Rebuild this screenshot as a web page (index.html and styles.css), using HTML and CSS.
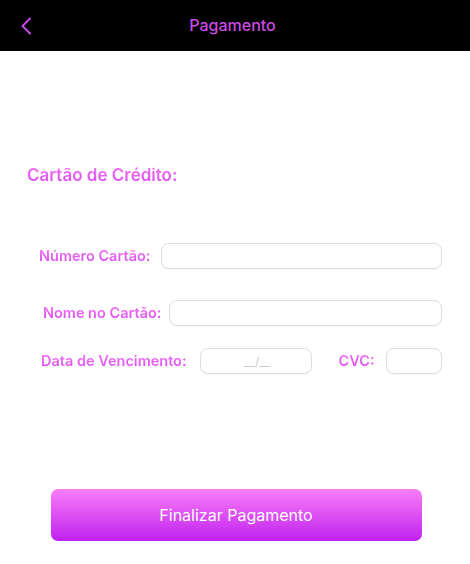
FILE: index.html
```html
<!DOCTYPE html>
<html lang="pt">
<head>
<meta charset="utf-8">
<title>Pagamento</title>
<link rel="stylesheet" href="styles.css">
</head>
<body>
<header class="topbar">
  <button class="back" aria-label="Voltar">
    <svg width="12" height="18" viewBox="0 0 12 18"><path d="M10 1.5 L2.5 9 L10 16.5" fill="none" stroke="#c64ae6" stroke-width="2" stroke-linecap="round" stroke-linejoin="round"/></svg>
  </button>
  <h1 class="title">Pagamento</h1>
</header>
<main class="content">
  <h2 class="section">Cartão de Crédito:</h2>
  <div class="row row-num">
    <label class="label">Número Cartão:</label>
    <div class="field grow"></div>
  </div>
  <div class="row row-name">
    <label class="label">Nome no Cartão:</label>
    <div class="field grow"></div>
  </div>
  <div class="row row-date">
    <label class="label">Data de Vencimento:</label>
    <div class="field date"><span class="ph">__/__</span></div>
    <label class="label cvc-label">CVC:</label>
    <div class="field cvc"></div>
  </div>
  <div class="actions">
    <button class="primary">Finalizar Pagamento</button>
  </div>
</main>
</body>
</html>
```
FILE: styles.css
```css
* { box-sizing: border-box; }
html, body { margin: 0; padding: 0; background: #fff; }
body { font-family: Inter, "Noto Sans", sans-serif; width: 470px; height: 564px; overflow: hidden; }
.topbar {
  height: 51px; background: #000; display: flex; align-items: center; position: relative;
}
.back {
  background: none; border: 0; padding: 0; margin-left: 19px; width: 14px; height: 20px;
  display: flex; align-items: center; justify-content: center; margin-top: 0;
}
.title {
  position: absolute; left: 0; right: 0; top: 0; margin: 0; text-align: center;
  font-size: 16px; font-weight: 500; color: #c94ae3; line-height: 51px; padding-right: 5px;
}
.content { display: flex; flex-direction: column; }
.label, .section {
  background: linear-gradient(#f77ef6, #d63ff0);
  -webkit-background-clip: text; background-clip: text; color: transparent;
  font-weight: 600;
}
.section { margin: 112px 0 0 27px; font-size: 17px; line-height: 24px; align-self: flex-start; }
.row { display: flex; align-items: center; padding-right: 28px; }
.label { font-size: 14.5px; line-height: 18px; white-space: nowrap; }
.field {
  height: 26px; border: 1px solid #dedede; border-radius: 8px; background: #fff;
  box-shadow: 0 1px 1px rgba(0,0,0,0.04);
}
.grow { flex: 1; }
.row-num { margin-top: 56px; padding-left: 39px; gap: 11px; }
.row-name { margin-top: 31px; padding-left: 43px; gap: 8px; }
.row-date { margin-top: 22px; padding-left: 41px; }
.date { width: 113px; margin-left: 13px; display: flex; align-items: center; justify-content: center; }
.ph { color: #c9c9c9; font-size: 12px; letter-spacing: 0; padding-left: 3px; }
.cvc-label { margin-left: 27px; }
.cvc { width: 57px; margin-left: 11px; }
.actions { display: flex; justify-content: center; margin-top: 115px; padding-right: 18px; padding-left: 17px; }
.primary {
  width: 371px; height: 52px; border: 0; border-radius: 7px; margin-left: 3px;
  background: linear-gradient(#f97ef8, #c021ef);
  color: #fff; font-family: Inter, sans-serif; font-size: 16px; font-weight: 400;
}
```
